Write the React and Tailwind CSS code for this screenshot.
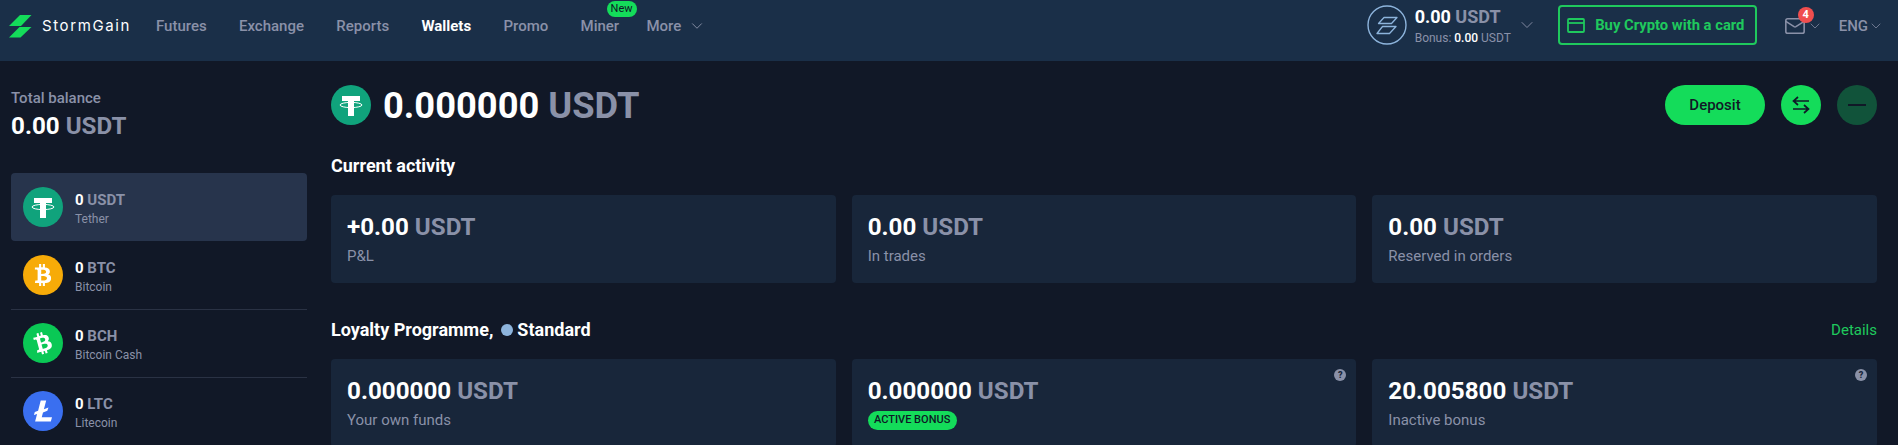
import React from "react";
import { ChevronDown, Mail } from "lucide-react";
import { FaBtc } from "react-icons/fa";

const font = { fontFamily: "Roboto, sans-serif" };

function Tether({ size = 40 }) {
  return (
    <svg width={size} height={size} viewBox="0 0 40 40" className="shrink-0">
      <circle cx="20" cy="20" r="20" fill="#10a37c" />
      <path d="M11 11h18v5h-6v3h-6v-3h-6z" fill="#fff" />
      <path d="M17 18h6v13h-6z" fill="#fff" />
      <ellipse cx="20" cy="20" rx="11" ry="2.6" fill="none" stroke="#fff" strokeWidth="1" />
    </svg>
  );
}

function Coin({ bg, children }) {
  return (
    <div className={`w-10 h-10 rounded-full flex items-center justify-center shrink-0 ${bg}`}>{children}</div>
  );
}

function Ltc() {
  return (
    <svg width="20" height="24" viewBox="0 0 22 26">
      <path d="M8.5 1.5h6L12 11l5-1.8-1.2 3.6-4.8 1.8-1.4 5.4h11.3L19.6 24.5H2.3l2.2-8.3L1 17.4l1-3.3 3.6-1.3z" fill="#fff" />
    </svg>
  );
}

function Amount({ v, u, className = "" }) {
  return (
    <div className={`font-bold whitespace-nowrap ${className}`}>
      <span className="text-white">{v}</span> <span className="text-[#8a91a8]">{u}</span>
    </div>
  );
}

function Row({ icon, v, u, name, active, divider }) {
  return (
    <div className={`flex items-center gap-3 px-3 ${active ? "h-[68px] rounded bg-[#27344c]" : ""} ${divider ? "h-[69px] -mb-px border-b border-[#2a3244] pb-px" : ""} ${!active && !divider ? "h-[68px]" : ""}`}>
      {icon}
      <div className="pt-[3px]">
        <Amount v={v} u={u} className="text-[15px] leading-5" />
        <div className="text-xs leading-4 mt-px text-[#8a91a8]">{name}</div>
      </div>
    </div>
  );
}

function Help() {
  return (
    <div className="absolute top-[10px] right-[10px] w-3 h-3 rounded-full bg-[#8a91a8] flex items-center justify-center text-[9px] font-black leading-none text-[#18263a]">?</div>
  );
}

function Card({ v, u, label, help, pill }) {
  return (
    <div className="relative h-[88px] rounded bg-[#18263a] px-4 pt-[18px]">
      {help && <Help />}
      <Amount v={v} u={u} className="text-[24.2px] leading-7" />
      {pill ? (
        <div className="mt-[6px] w-[89px] h-[19px] rounded-full bg-[#14dc5a] flex items-center justify-center text-[11px] font-medium text-[#0e1726]">ACTIVE BONUS</div>
      ) : (
        <div className="text-[15px] leading-5 mt-[5px] text-[#8a91a8]">{label}</div>
      )}
    </div>
  );
}

function NavItem({ children, active, badge }) {
  return (
    <div className={`relative text-[15px] ${active ? "text-white font-bold" : "text-[#8a91a8] font-medium"}`}>
      {children}
      {badge && (
        <div className="absolute -top-[14px] left-[26px] w-[30px] h-4 rounded-full bg-[#14dc5a] flex items-center justify-center text-[11px] font-normal text-[#0e1726]">New</div>
      )}
    </div>
  );
}

export default function App() {
  return (
    <div style={font} className="h-screen overflow-hidden bg-[#111827] text-white">
      <header className="h-[61px] bg-[#1a2f48] flex items-center pl-[9px] pr-[14px] pb-[11px]">
        <div className="flex items-center mt-[2px]">
          <svg width="23" height="23" viewBox="0 0 23 23" className="shrink-0">
            <path d="M11 0h11.5L12 11H0z" fill="#14dc5a" />
            <path d="M10.5 12h12L11.5 22.5H0z" fill="#14dc5a" />
          </svg>
          <div style={{ fontFamily: "Inter, sans-serif" }} className="ml-[10px] w-[86px] text-[15px] tracking-[1.6px] text-white whitespace-nowrap">StormGain</div>
          <nav className="ml-[28px] flex items-center gap-[32.3px]">
            <NavItem>Futures</NavItem>
            <NavItem>Exchange</NavItem>
            <NavItem>Reports</NavItem>
            <NavItem active>Wallets</NavItem>
            <NavItem>Promo</NavItem>
            <NavItem badge>Miner</NavItem>
            <div className="-ml-[5px] flex items-center gap-[7px] text-[15px] font-medium text-[#8a91a8]">
              More <ChevronDown size={18} strokeWidth={1.25} />
            </div>
          </nav>
        </div>
        <div className="ml-auto flex items-center">
          <svg width="40" height="40" viewBox="0 0 40 40" className="shrink-0">
            <circle cx="20" cy="20" r="19" fill="none" stroke="#8db4dc" strokeWidth="1.4" />
            <path d="M17 12.5h13l-5.5 6H11.5zM15.5 21.5H29l-6.5 7H10z" fill="none" stroke="#8db4dc" strokeWidth="1.3" strokeLinejoin="round" />
          </svg>
          <div className="ml-2 w-[102px]">
            <Amount v="0.00" u="USDT" className="text-lg leading-6 pt-px" />
            <div className="text-xs leading-4 mt-px text-[#8a91a8] whitespace-nowrap">Bonus: <b className="text-white font-medium">0.00</b> USDT</div>
          </div>
          <ChevronDown size={20} strokeWidth={1.1} className="text-[#8a91a8]" />
          <div className="ml-[21.5px] h-10 w-[199px] border-2 border-[#1fc95d] rounded flex items-center pl-[7px] gap-[10px] text-[#1fc95d] font-bold text-[14.8px] whitespace-nowrap">
            <svg width="18" height="15" viewBox="0 0 18 15" fill="none" stroke="#1fc95d" strokeWidth="1.8">
              <rect x="1" y="1" width="16" height="13" rx="1" />
              <path d="M1 5h16" />
            </svg>
            Buy Crypto with a card
          </div>
          <div className="relative ml-[26.5px] mt-[2px] flex items-center text-[#8a91a8]">
            <Mail size={22} strokeWidth={1.7} />
            <div className="absolute -top-[8px] left-[14px] w-4 h-4 rounded-full bg-[#f04e4e] flex items-center justify-center text-[11px] font-bold text-white">4</div>
            <ChevronDown size={16} strokeWidth={1.1} className="ml-px" />
          </div>
          <div className="ml-[16px] mt-[2px] flex items-center text-[15px] font-medium text-[#8a91a8]">
            ENG <ChevronDown size={16} strokeWidth={1.1} />
          </div>
        </div>
      </header>

      <div className="flex">
        <aside className="ml-[11px] w-[296px] shrink-0 pt-[27px]">
          <div className="text-[15px] font-medium leading-5 text-[#8a91a8]">Total balance</div>
          <Amount v="0.00" u="USDT" className="text-[24.2px] leading-7 mt-[4px]" />
          <div className="mt-[33px]">
            <Row active v="0" u="USDT" name="Tether" icon={<Tether />} />
            <Row divider v="0" u="BTC" name="Bitcoin" icon={<Coin bg="bg-[#f7ab08]"><FaBtc size={22} className="text-white" /></Coin>} />
            <Row divider v="0" u="BCH" name="Bitcoin Cash" icon={<Coin bg="bg-[#0ac855]"><FaBtc size={22} className="text-white -rotate-[15deg]" /></Coin>} />
            <Row v="0" u="LTC" name="Litecoin" icon={<Coin bg="bg-[#3a6ff0]"><Ltc /></Coin>} />
          </div>
        </aside>

        <main className="ml-6 flex-1 mr-[21px] pt-6">
          <div className="flex items-center h-10">
            <Tether />
            <Amount v="0.000000" u="USDT" className="ml-3 text-[36.3px] pt-[2px]" />
            <div className="ml-auto flex items-center gap-4">
              <div className="w-[100px] h-10 pt-px rounded-full bg-[#14dc5a] flex items-center justify-center text-[15px] font-medium text-[#111827]">Deposit</div>
              <div className="w-10 h-10 rounded-full bg-[#14dc5a] flex items-center justify-center">
                <svg width="18" height="18" viewBox="0 0 18 18" fill="none" stroke="#0f1a28" strokeWidth="1.7">
                  <path d="M17 5H1.5M6 1 1.5 5 6 9M1 13h15.5M12 9l4.5 4-4.5 4" />
                </svg>
              </div>
              <div className="w-10 h-10 rounded-full bg-[#11533a] flex items-center justify-center">
                <div className="w-[18px] h-[2px] bg-[#111827]" />
              </div>
            </div>
          </div>

          <div className="mt-[29px] text-lg font-bold leading-6">Current activity</div>
          <div className="mt-[17px] grid grid-cols-3 gap-4">
            <Card v="+0.00" u="USDT" label="P&L" />
            <Card v="0.00" u="USDT" label="In trades" />
            <Card v="0.00" u="USDT" label="Reserved in orders" />
          </div>

          <div className="mt-[35px] flex items-center justify-between h-6">
            <div className="flex items-center text-lg font-bold leading-6">
              Loyalty Programme,
              <span className="ml-2 mr-1 w-3 h-3 rounded-full bg-[#8db4dc]" />
              Standard
            </div>
            <div className="text-[15px] text-[#1fc95d]">Details</div>
          </div>
          <div className="mt-[17px] grid grid-cols-3 gap-4">
            <Card v="0.000000" u="USDT" label="Your own funds" />
            <Card v="0.000000" u="USDT" pill help />
            <Card v="20.005800" u="USDT" label="Inactive bonus" help />
          </div>
        </main>
      </div>
    </div>
  );
}
